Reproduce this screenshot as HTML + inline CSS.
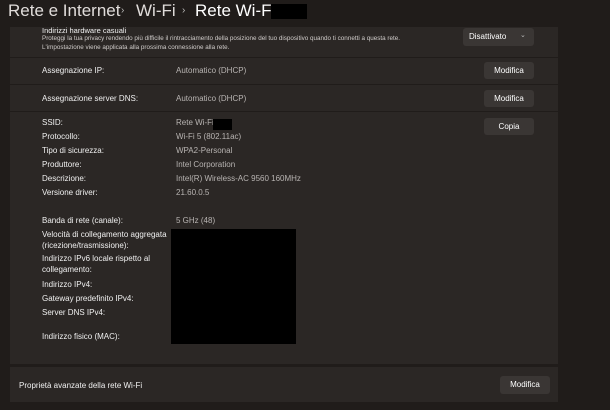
<!DOCTYPE html><html><head><style>
body{margin:0;width:610px;height:410px;background:#201c1a;font-family:"Liberation Sans",sans-serif;color:#fff;position:relative;overflow:hidden}
.a{position:absolute;white-space:nowrap}
.card{position:absolute;left:10px;width:548px;background:#2b2725}
.l{font-size:8px;color:#f0f0f0}
.v{font-size:8px;color:#b8b4b2}
.btn{position:absolute;background:#3a3634;border-radius:3px;font-size:8px;color:#fff;text-align:center}
.blk{position:absolute;background:#000}
</style></head><body>
<div class="a" style="left:8px;top:1px;font-size:17px;color:#e0dcda">Rete e Internet</div>
<div class="a" style="left:121px;top:5px;font-size:10px;color:#bbb">›</div>
<div class="a" style="left:136px;top:1px;font-size:17px;color:#e0dcda">Wi-Fi</div>
<div class="a" style="left:182px;top:5px;font-size:10px;color:#bbb">›</div>
<div class="a" style="left:195px;top:1px;font-size:17px;color:#fff">Rete Wi-Fi</div>
<div class="blk" style="left:271px;top:4px;width:36px;height:15px"></div>
<div class="card" style="top:27px;height:30px"></div>
<div class="card" style="top:58px;height:26px"></div>
<div class="card" style="top:85px;height:26px"></div>
<div class="card" style="top:112px;height:252px"></div>
<div class="card" style="top:367px;height:35px"></div>
<div class="a l" style="left:42px;top:26px;font-size:7.5px">Indirizzi hardware casuali</div>
<div class="a v" style="left:42px;top:35px;font-size:6.3px;color:#d0ccca">Proteggi la tua privacy rendendo più difficile il rintracciamento della posizione del tuo dispositivo quando ti connetti a questa rete.</div>
<div class="a v" style="left:42px;top:44px;font-size:6.3px;color:#d0ccca">L'impostazione viene applicata alla prossima connessione alla rete.</div>
<div class="btn" style="left:463px;top:28px;width:71px;height:18px;line-height:18px;text-align:left"><span style="margin-left:6px">Disattivato</span><span style="position:absolute;left:57px;top:-1px;font-size:7px;color:#bbb">⌄</span></div>
<div class="a l" style="left:42px;top:66px">Assegnazione IP:</div>
<div class="a v" style="left:176px;top:66px">Automatico (DHCP)</div>
<div class="btn" style="left:484px;top:62px;width:50px;height:17px;line-height:17px">Modifica</div>
<div class="a l" style="left:42px;top:94px">Assegnazione server DNS:</div>
<div class="a v" style="left:176px;top:94px">Automatico (DHCP)</div>
<div class="btn" style="left:484px;top:90px;width:50px;height:17px;line-height:17px">Modifica</div>
<div class="btn" style="left:484px;top:118px;width:50px;height:17px;line-height:17px">Copia</div>
<div class="a l" style="left:42px;top:118px">SSID:</div><div class="a v" style="left:176px;top:118px">Rete Wi-Fi</div>
<div class="blk" style="left:213px;top:119px;width:19px;height:11px"></div>
<div class="a l" style="left:42px;top:132px">Protocollo:</div><div class="a v" style="left:176px;top:132px">Wi-Fi 5 (802.11ac)</div>
<div class="a l" style="left:42px;top:146px">Tipo di sicurezza:</div><div class="a v" style="left:176px;top:146px">WPA2-Personal</div>
<div class="a l" style="left:42px;top:160px">Produttore:</div><div class="a v" style="left:176px;top:160px">Intel Corporation</div>
<div class="a l" style="left:42px;top:174px">Descrizione:</div><div class="a v" style="left:176px;top:174px">Intel(R) Wireless-AC 9560 160MHz</div>
<div class="a l" style="left:42px;top:188px">Versione driver:</div><div class="a v" style="left:176px;top:188px">21.60.0.5</div>
<div class="a l" style="left:42px;top:216px">Banda di rete (canale):</div><div class="a v" style="left:176px;top:216px">5 GHz (48)</div>
<div class="a l" style="left:42px;top:230px;line-height:10.5px">Velocità di collegamento aggregata<br>(ricezione/trasmissione):</div>
<div class="a l" style="left:42px;top:254px;line-height:10.5px">Indirizzo IPv6 locale rispetto al<br>collegamento:</div>
<div class="a l" style="left:42px;top:280px">Indirizzo IPv4:</div>
<div class="a l" style="left:42px;top:294px">Gateway predefinito IPv4:</div>
<div class="a l" style="left:42px;top:308px">Server DNS IPv4:</div>
<div class="a l" style="left:42px;top:332px">Indirizzo fisico (MAC):</div>
<div class="blk" style="left:171px;top:229px;width:125px;height:115px"></div>
<div class="a l" style="left:19px;top:381px">Proprietà avanzate della rete Wi-Fi</div>
<div class="btn" style="left:500px;top:376px;width:50px;height:18px;line-height:18px">Modifica</div>
</body></html>
